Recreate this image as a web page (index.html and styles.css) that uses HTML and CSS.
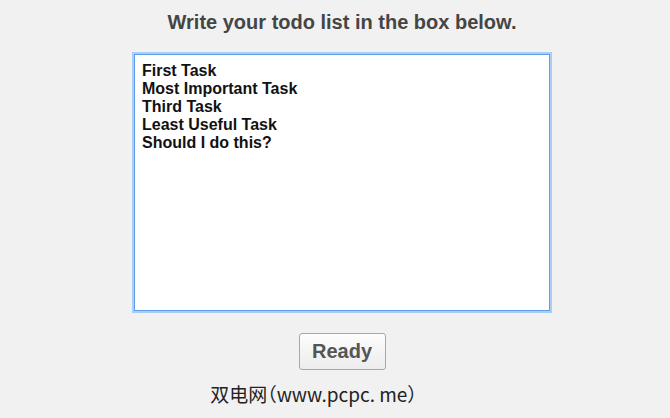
FILE: index.html
```html
<!DOCTYPE html>
<html>
<head>
<meta charset="utf-8">
<link rel="stylesheet" href="styles.css">
</head>
<body>
<div class="page">
  <h1 class="title">Write your todo list in the box below.</h1>
  <div class="box">First Task
Most Important Task
Third Task
Least Useful Task
Should I do this?</div>
  <button class="ready">Ready</button>
  <div class="mark">双电网（www.pcpc. me）</div>
</div>
</body>
</html>
```
FILE: styles.css
```css
html, body { margin: 0; padding: 0; }
body {
  background: #f1f1f1;
  width: 670px;
  height: 418px;
  overflow: hidden;
  font-family: "Liberation Sans", Arial, sans-serif;
}
.page {
  display: flex;
  flex-direction: column;
  align-items: center;
  padding-left: 14px;
}
.title {
  margin: 11px 0 0 0;
  font-size: 20px;
  line-height: 22px;
  font-weight: bold;
  color: #454545;
}
.box {
  margin-top: 21px;
  width: 400px;
  height: 243px;
  background: #fff;
  border: 1px solid #5e9ee8;
  box-shadow: 0 0 0 2px #a9cdf5;
  padding: 7px 7px 5px 7px;
  white-space: pre;
  font-size: 16px;
  line-height: 18px;
  font-weight: bold;
  color: #111;
}
.ready {
  margin-top: 22px;
  width: 87px;
  height: 37px;
  border: 1px solid #a8a8a8;
  border-radius: 3px;
  background: linear-gradient(#fdfdfd, #ececec);
  font-family: "Liberation Sans", Arial, sans-serif;
  font-size: 20px;
  font-weight: bold;
  color: #555;
  padding: 0;
}
.mark {
  margin-top: 12px;
  margin-left: -57px;
  font-family: "Noto Sans CJK SC", sans-serif;
  font-feature-settings: "halt";
  font-size: 19px;
  line-height: 24px;
  color: #222;
}
```
